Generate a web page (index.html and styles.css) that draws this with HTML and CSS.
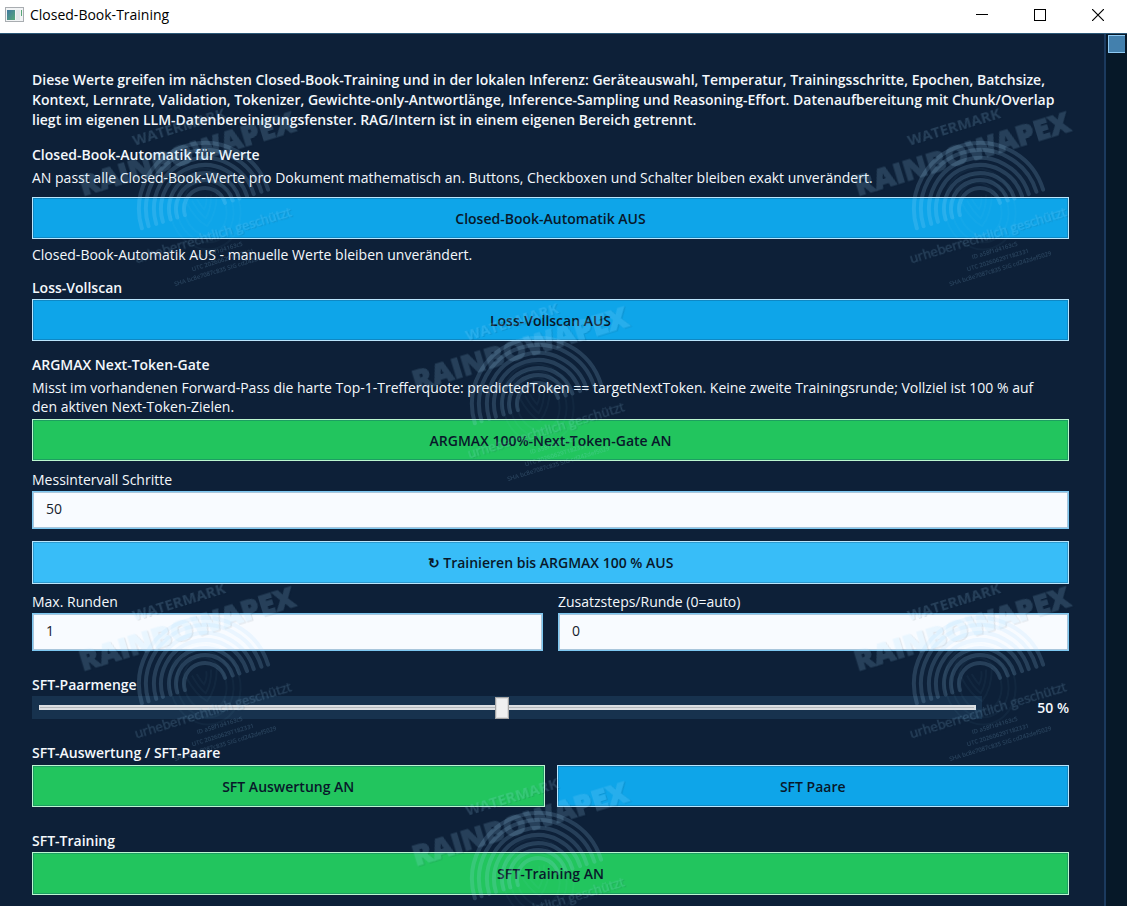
FILE: index.html
```html
<!DOCTYPE html>
<html lang="de">
<head>
<meta charset="utf-8">
<title>Closed-Book-Training</title>
<link rel="stylesheet" href="styles.css">
</head>
<body>
<div class="window">
  <header class="titlebar">
    <svg class="app-icon" width="20" height="16" viewBox="0 0 20 16" aria-hidden="true">
      <defs><linearGradient id="pane" x1="0" y1="0" x2="1" y2="1"><stop offset="0" stop-color="#3f78a0"/><stop offset="1" stop-color="#58a878"/></linearGradient></defs>
      <rect x=".5" y=".5" width="18" height="14" fill="#f2f4f5" stroke="#a9adb1"/>
      <rect x="2" y="3" width="8" height="10" fill="url(#pane)"/>
      <rect x="11" y="3" width="4" height="10" fill="#e2e6e8"/>
      <rect x="16" y="3" width="1" height="6" fill="#58a878"/>
    </svg>
    <h1 class="title">Closed-Book-Training</h1>
    <div class="controls">
      <button class="control" aria-label="Minimieren"><svg width="12" height="12"><path d="M0 5.5H12" stroke="#000"/></svg></button>
      <button class="control" aria-label="Maximieren"><svg width="12" height="12"><rect x=".5" y=".5" width="11" height="11" fill="none" stroke="#000"/></svg></button>
      <button class="control" aria-label="Schließen"><svg width="12" height="12"><path d="M0 0L12 12M12 0L0 12" stroke="#000" stroke-width="1.2"/></svg></button>
    </div>
  </header>
  <div class="body">
    <main class="panel">
      <p class="intro">Diese Werte greifen im nächsten Closed-Book-Training und in der lokalen Inferenz: Geräteauswahl, Temperatur, Trainingsschritte, Epochen, Batchsize, Kontext, Lernrate, Validation, Tokenizer, Gewichte-only-Antwortlänge, Inference-Sampling und Reasoning-Effort. Datenaufbereitung mit Chunk/Overlap liegt im eigenen LLM-Datenbereinigungsfenster. RAG/Intern ist in einem eigenen Bereich getrennt.</p>

      <section class="group auto">
        <h2 class="heading">Closed-Book-Automatik für Werte</h2>
        <p class="text">AN passt alle Closed-Book-Werte pro Dokument mathematisch an. Buttons, Checkboxen und Schalter bleiben exakt unverändert.</p>
        <button class="toggle blue">Closed-Book-Automatik AUS</button>
        <p class="text status">Closed-Book-Automatik AUS - manuelle Werte bleiben unverändert.</p>
      </section>

      <section class="group scan">
        <h2 class="heading">Loss-Vollscan</h2>
        <button class="toggle blue">Loss-Vollscan AUS</button>
      </section>

      <section class="group gate">
        <h2 class="heading">ARGMAX Next-Token-Gate</h2>
        <p class="text">Misst im vorhandenen Forward-Pass die harte Top-1-Trefferquote: predictedToken == targetNextToken. Keine zweite Trainingsrunde; Vollziel ist 100 % auf<br>den aktiven Next-Token-Zielen.</p>
        <button class="toggle green">ARGMAX 100%-Next-Token-Gate AN</button>
        <div class="field interval">
          <label for="interval">Messintervall Schritte</label>
          <input class="entry" id="interval" type="text" value="50">
        </div>
        <button class="toggle tall sky">↻ Trainieren bis ARGMAX 100 % AUS</button>
        <div class="fields">
          <div class="field">
            <label for="rounds">Max. Runden</label>
            <input class="entry" id="rounds" type="text" value="1">
          </div>
          <div class="field">
            <label for="steps">Zusatzsteps/Runde (0=auto)</label>
            <input class="entry" id="steps" type="text" value="0">
          </div>
        </div>
      </section>

      <section class="group wide">
        <h2 class="heading"><label for="pairs">SFT-Paarmenge</label></h2>
        <div class="slider-row">
          <input class="slider" id="pairs" type="range" min="1" max="100" value="50">
          <output class="amount" for="pairs">50 %</output>
        </div>
      </section>

      <section class="group wide">
        <h2 class="heading">SFT-Auswertung / SFT-Paare</h2>
        <div class="pair">
          <button class="toggle green">SFT Auswertung AN</button>
          <button class="toggle blue">SFT Paare</button>
        </div>
      </section>

      <section class="group wide">
        <h2 class="heading">SFT-Training</h2>
        <button class="toggle tall green">SFT-Training AN</button>
      </section>
    </main>
    <div class="scrollbar"><div class="thumb"></div></div>
  </div>

  <svg class="watermarks" aria-hidden="true">
    <defs>
      <g id="mark" transform="rotate(-17)">
        <text class="wm-small" x="-1" y="-81">WATERMARK</text>
        <text class="wm-name" x="-1" y="-48">RAINBOWAPEX</text>
        <g class="wm-arcs">
          <path d="M-21 0a21 21 0 0 1 42 0M-29 0a29 29 0 0 1 58 0M-36 0a36 36 0 0 1 72 0M-44 0a44 44 0 0 1 88 0M-51 0a51 51 0 0 1 102 0M-59 0a59 59 0 0 1 118 0M-66 0a66 66 0 0 1 132 0"/>
        </g>
        <g class="wm-faint">
          <ellipse rx="35" ry="41"/><ellipse rx="28" ry="34"/><ellipse rx="21" ry="27"/>
          <path d="M-16 -12Q-12 8 -3 17Q10 8 16 -12M-10 -12Q-7 2 -2 9Q6 2 10 -12M-5 -12Q-3 -4 -1 0Q4 -5 5 -12"/>
        </g>
        <text class="wm-claim" y="32">urheberrechtlich geschützt</text>
        <text class="wm-code" x="2" y="46">ID a58f1d4163c5</text>
        <text class="wm-code" x="2" y="56">UTC 20260629T182331</text>
        <text class="wm-code" x="2" y="65">SHA bc8e7087c835 SIG cd242def5029</text>
      </g>
    </defs>
    <use href="#mark" x="205" y="209"/>
    <use href="#mark" x="980" y="209"/>
    <use href="#mark" x="538" y="404"/>
    <use href="#mark" x="205" y="684"/>
    <use href="#mark" x="980" y="684"/>
    <use href="#mark" x="538" y="879"/>
  </svg>
</div>
</body>
</html>
```
FILE: styles.css
```css
* { box-sizing: border-box; }

body {
  margin: 0;
  background: #0d2038;
  font-family: "Open Sans", "Noto Sans", sans-serif;
  font-size: 14px;
  line-height: 20px;
  color: #f4f8fc;
}

h1, h2, p { margin: 0; }

button, input { font: inherit; }

.window {
  position: relative;
  display: flex;
  flex-direction: column;
  min-height: 100vh;
  overflow: hidden;
}

.titlebar {
  display: flex;
  align-items: center;
  height: 34px;
  padding: 0 0 4px 5px;
  gap: 5px;
  background: #fff;
  border-bottom: 1px solid #2b5878;
  color: #000;
}

.title {
  flex: 1;
  font-size: 14px;
  font-weight: 400;
}

.controls { display: flex; }

.control {
  display: grid;
  place-items: center;
  width: 58px;
  height: 28px;
  padding: 0;
  border: 0;
  background: none;
}

.body {
  display: flex;
  flex: 1;
}

.panel {
  flex: 1;
  padding: 36px 35px 12px 32px;
  border-right: 2px solid #1b3a5e;
}

.scrollbar {
  width: 21px;
  padding: 1px 2px;
  background: #061828;
}

.thumb {
  height: 18px;
  background: #4380ad;
  border: 1px solid #8fcaf3;
  border-right: 0;
}

.intro { font-weight: 600; }

.heading {
  font-size: 14px;
  font-weight: 600;
}

.group {
  display: flex;
  flex-direction: column;
}

.auto { margin-top: 15px; }
.auto .text { margin-top: 3px; }
.auto .toggle { margin-top: 9px; }
.auto .status { margin-top: 6px; }

.scan { margin-top: 13px; }
.scan .toggle { margin-top: 1px; }

.gate { margin-top: 14px; }

.gate .text {
  margin: 3px 0;
  line-height: 19px;
}

.interval { margin: 9px 0 12px; }

.wide {
  margin-top: 24px;
  gap: 1px;
}

.toggle {
  height: 42px;
  padding: 1px 12px 0;
  border: 1px solid;
  box-shadow: inset 0 0 0 1px rgba(20, 70, 110, .3);
  color: #08182a;
  font-weight: 600;
}

.tall { height: 43px; }

.blue { background: #0ea5e9; border-color: #bae6fd; }
.sky { background: #38bdf8; border-color: #bae6fd; }
.green { background: #22c55e; border-color: #bbf7d0; }

.field {
  display: flex;
  flex-direction: column;
  gap: 1px;
}

.entry {
  width: 100%;
  height: 38px;
  padding: 0 13px 3px;
  border: 1px solid #7cc8f2;
  box-shadow: inset 0 0 0 1px #a9c6dc;
  background: #f8fbff;
  color: #14202c;
}

.fields {
  display: grid;
  grid-template-columns: 1fr 1fr;
  gap: 15px;
  margin-top: 8px;
}

.slider-row {
  display: flex;
  align-items: center;
}

.slider {
  flex: 1;
  appearance: none;
  height: 23px;
  margin: 0;
  background:
    linear-gradient(#b4b8bc, #b4b8bc) center / calc(100% - 16px) 1px no-repeat,
    linear-gradient(#dcdfe2, #dcdfe2) center / calc(100% - 13px) 5px no-repeat,
    #17324e;
}

.slider::-webkit-slider-thumb {
  appearance: none;
  width: 14px;
  height: 22px;
  border: 1px solid #a4a4a4;
  box-shadow: inset 0 0 0 1px #dcdcdc;
  background: #f0f0f0;
}

.amount {
  width: 87px;
  text-align: right;
  font-weight: 600;
}

.pair {
  display: grid;
  grid-template-columns: 1fr 1fr;
  gap: 12px;
  margin-top: 1px;
}

.watermarks {
  position: absolute;
  inset: 0;
  width: 100%;
  height: 100%;
  pointer-events: none;
}

.watermarks text {
  text-anchor: middle;
  fill: #a5deff;
  stroke: #a5deff;
  stroke-width: 0;
  opacity: .17;
  filter: drop-shadow(1px 1px 0 rgba(0, 20, 40, .6));
}

.wm-small { font-size: 15px; font-weight: 700; }
.watermarks .wm-name { font-size: 29px; font-weight: 800; stroke-width: 1; }
.watermarks .wm-claim { font-size: 13px; stroke-width: .4; }
.watermarks .wm-code { font-size: 6px; font-weight: 600; filter: none; }

.wm-arcs {
  fill: none;
  stroke: rgba(165, 222, 255, .17);
  stroke-width: 4;
  stroke-linecap: round;
}

.wm-faint {
  fill: none;
  stroke: rgba(165, 222, 255, .04);
  stroke-width: 2;
}
```
